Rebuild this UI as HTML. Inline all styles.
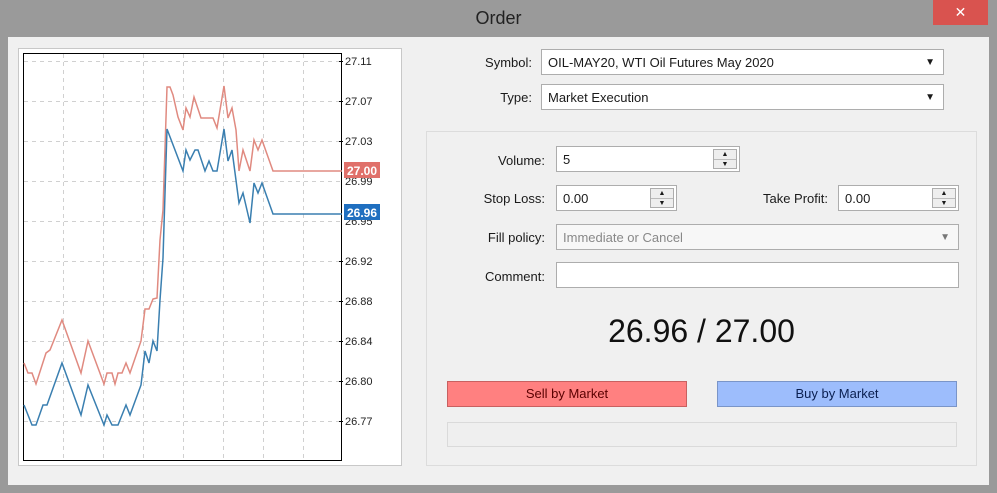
<!DOCTYPE html>
<html><head><meta charset="utf-8"><style>
*{box-sizing:border-box;margin:0;padding:0}
body{width:997px;height:493px;background:#9a9a9a;position:relative;overflow:hidden;font-family:"Liberation Sans",sans-serif;font-size:13px;color:#1a1a1a}
.abs{position:absolute}
.title{left:0;top:8px;width:997px;text-align:center;font-size:18px;color:#222}
.close{left:933px;top:0;width:55px;height:25px;background:#d9534f;color:#fff;text-align:center;font-size:14px;line-height:24px}
.win{left:8px;top:37px;width:981px;height:448px;background:#f0f0f0}
.box{background:#fff;border:1px solid #adadad;height:26px;line-height:25px;padding-left:6px}
.lbl{text-align:right;width:120px}
.arrow{position:absolute;right:8px;top:0;font-size:10px}
.spin{position:absolute;right:2px;top:2px;width:24px;height:20px;border:1px solid #adadad;background:#eee;font-size:7px;line-height:9px;text-align:center}
.spin div{height:9px}
.spin div+div{border-top:1px solid #bbb}
</style></head><body>
<div class="abs title">Order</div>
<div class="abs close">✕</div>
<div class="abs win"></div>
<div class="abs" style="left:18px;top:48px;width:384px;height:418px;background:#fff;border:1px solid #c8c8c8"></div>
<svg class="abs" style="left:0;top:0" width="420" height="493">
<g stroke="#d0d0d0" stroke-dasharray="4,4" stroke-width="1">
<line x1="63.5" y1="54" x2="63.5" y2="460"/><line x1="103.5" y1="54" x2="103.5" y2="460"/><line x1="143.5" y1="54" x2="143.5" y2="460"/><line x1="183.5" y1="54" x2="183.5" y2="460"/><line x1="223.5" y1="54" x2="223.5" y2="460"/><line x1="263.5" y1="54" x2="263.5" y2="460"/><line x1="303.5" y1="54" x2="303.5" y2="460"/>
<line x1="24" y1="61.5" x2="342" y2="61.5"/><line x1="24" y1="101.5" x2="342" y2="101.5"/><line x1="24" y1="141.5" x2="342" y2="141.5"/><line x1="24" y1="181.5" x2="342" y2="181.5"/><line x1="24" y1="221.5" x2="342" y2="221.5"/><line x1="24" y1="261.5" x2="342" y2="261.5"/><line x1="24" y1="301.5" x2="342" y2="301.5"/><line x1="24" y1="341.5" x2="342" y2="341.5"/><line x1="24" y1="381.5" x2="342" y2="381.5"/><line x1="24" y1="421.5" x2="342" y2="421.5"/>
</g>
<rect x="23.5" y="53.5" width="318" height="407" fill="none" stroke="#000"/>
<polyline fill="none" stroke="#e08a80" stroke-width="1.5" points="24,363 28,373 32,373 36,384 46,353 50,350 62,320 81,373 88,341 104,384 107,373 112,373 115,384 118,373 122,373 126,363 130,373 141,341 145,309 149,309 153,299 157,298 160,240 163,210 167,87 170,87 173,95 178,117 183,130 186,108 190,117 194,97 201,118 213,118 217,128 224,86 228,118 232,108 236,130 239,171 243,150 250,171 254,140 258,150 262,140 273,171 342,171"/>
<polyline fill="none" stroke="#3a7fb0" stroke-width="1.5" points="24,405 32,425 36,425 43,405 47,405 62,363 81,415 88,385 104,425 107,415 112,425 118,425 126,405 130,415 141,385 145,351 149,363 153,341 157,351 160,300 163,258 167,129 183,171 186,150 190,160 195,150 198,150 205,171 209,161 213,171 217,171 224,129 228,161 232,150 239,203 243,193 250,223 254,183 258,193 262,183 273,214 342,214"/>
<g font-family="Liberation Sans" font-size="11" fill="#222">
<text x="345" y="65">27.11</text><text x="345" y="105">27.07</text><text x="345" y="145">27.03</text><text x="345" y="185">26.99</text><text x="345" y="225">26.95</text><text x="345" y="265">26.92</text><text x="345" y="305">26.88</text><text x="345" y="345">26.84</text><text x="345" y="385">26.80</text><text x="345" y="425">26.77</text>
</g>
<g stroke="#000"><line x1="339" y1="61.5" x2="343" y2="61.5"/><line x1="339" y1="101.5" x2="343" y2="101.5"/><line x1="339" y1="141.5" x2="343" y2="141.5"/><line x1="339" y1="261.5" x2="343" y2="261.5"/><line x1="339" y1="301.5" x2="343" y2="301.5"/><line x1="339" y1="341.5" x2="343" y2="341.5"/><line x1="339" y1="381.5" x2="343" y2="381.5"/><line x1="339" y1="421.5" x2="343" y2="421.5"/></g>
<rect x="344" y="162" width="36" height="16" fill="#e0706a"/>
<text x="347" y="175" font-family="Liberation Sans" font-size="12" font-weight="bold" fill="#fff">27.00</text>
<rect x="344" y="204" width="36" height="16" fill="#1f6fc0"/>
<text x="347" y="217" font-family="Liberation Sans" font-size="12" font-weight="bold" fill="#fff">26.96</text>
</svg>

<div class="abs lbl" style="left:412px;top:55px">Symbol:</div>
<div class="abs box" style="left:541px;top:49px;width:403px">OIL-MAY20, WTI Oil Futures May 2020<span class="arrow">▼</span></div>
<div class="abs lbl" style="left:412px;top:90px">Type:</div>
<div class="abs box" style="left:541px;top:84px;width:403px">Market Execution<span class="arrow">▼</span></div>

<div class="abs" style="left:426px;top:131px;width:551px;height:335px;border:1px solid #dcdcdc;background:#f0f0f0"></div>
<div class="abs lbl" style="left:425px;top:153px">Volume:</div>
<div class="abs box" style="left:556px;top:146px;width:184px">5<div class="spin"><div>▲</div><div>▼</div></div></div>
<div class="abs lbl" style="left:425px;top:191px">Stop Loss:</div>
<div class="abs box" style="left:556px;top:185px;width:121px">0.00<div class="spin"><div>▲</div><div>▼</div></div></div>
<div class="abs lbl" style="left:708px;top:191px">Take Profit:</div>
<div class="abs box" style="left:838px;top:185px;width:121px">0.00<div class="spin"><div>▲</div><div>▼</div></div></div>
<div class="abs lbl" style="left:425px;top:230px">Fill policy:</div>
<div class="abs box" style="left:556px;top:224px;width:403px;color:#888;background:#f7f7f7">Immediate or Cancel<span class="arrow" style="color:#777">▼</span></div>
<div class="abs lbl" style="left:425px;top:269px">Comment:</div>
<div class="abs box" style="left:556px;top:262px;width:403px"></div>
<div class="abs" style="left:426px;top:313px;width:551px;text-align:center;font-size:32px;color:#111">26.96 / 27.00</div>
<div class="abs" style="left:447px;top:381px;width:240px;height:26px;background:#ff8080;border:1px solid #c86060;text-align:center;line-height:24px;color:#5a0000">Sell by Market</div>
<div class="abs" style="left:717px;top:381px;width:240px;height:26px;background:#9dbdfc;border:1px solid #7a95c8;text-align:center;line-height:24px;color:#0a1f50">Buy by Market</div>
<div class="abs" style="left:447px;top:422px;width:510px;height:25px;border:1px solid #dadada;background:#efefef"></div>
</body></html>
